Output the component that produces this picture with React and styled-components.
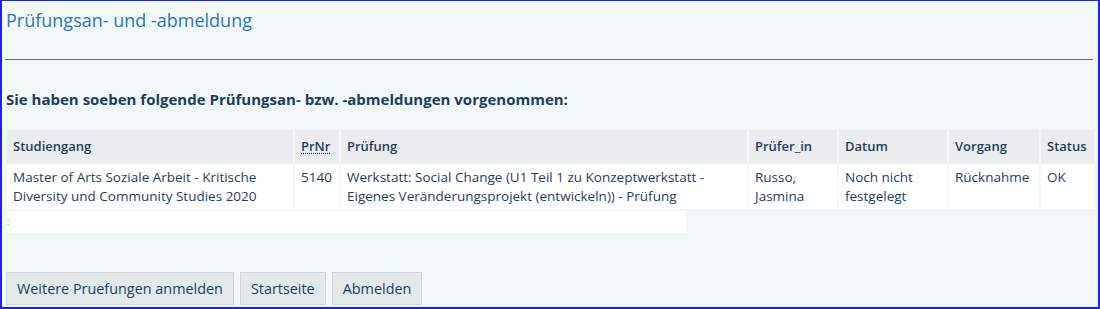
import React from "react";
import styled, { createGlobalStyle } from "styled-components";

const Global = createGlobalStyle`
  html, body { margin: 0; padding: 0; background: #ffffff; }
  body { font-family: "Open Sans", "Noto Sans", sans-serif; }
`;

const Frame = styled.div`
  box-sizing: border-box;
  width: 1100px;
  height: 309px;
  border-style: solid;
  border-color: #1f1ff2;
  border-width: 1px 2px 2px 2px;
  background: #f2f7f8;
  padding: 0 3px 0 3px;
  display: flex;
  flex-direction: column;
  overflow: hidden;
`;

const Title = styled.h1`
  margin: 7px 0 0 1px;
  font-size: 18px;
  line-height: 24px;
  font-weight: 400;
  color: #2b77b6;
`;

const Rule = styled.hr`
  margin: 27px 2px 0 0;
  border: 0;
  height: 1px;
  background: #6d6d6d;
`;

const Lead = styled.h2`
  margin: 29px 0 0 1px;
  font-size: 15px;
  line-height: 20px;
  font-weight: 700;
  color: #1d3f5e;
`;

const Table = styled.table`
  margin: 19px 0 0 0;
  border-collapse: separate;
  border-spacing: 2px;
  width: 1091px;
  font-size: 13.5px;
  line-height: 19px;
  color: #1d3f5e;
`;

const Th = styled.th`
  background: #ebeced;
  text-align: left;
  font-size: 13px;
  font-weight: 600;
  padding: 7px 6px 7px 6px;
  height: 19px;
  width: ${(p) => p.$w || "auto"};
`;

const Td = styled.td`
  background: #ffffff;
  vertical-align: top;
  padding: 3px 6px 3px 6px;
  height: 38px;
`;

const Abbr = styled.abbr`
  text-decoration: underline dotted;
  text-underline-offset: 2px;
  cursor: help;
`;

const Blank = styled.div`
  margin: 0 0 0 2px;
  width: 679px;
  height: 22px;
  background: #ffffff;
  font-size: 9px;
  line-height: 22px;
  color: #7a8a99;
`;

const Actions = styled.div`
  margin-top: 39px;
  display: flex;
  gap: 6px;
  margin-left: 1px;
`;

const Button = styled.button`
  box-sizing: border-box;
  height: 33px;
  padding: 0 10px;
  font-family: "Open Sans", "Noto Sans", sans-serif;
  font-size: 14.4px;
  color: #1d3f5e;
  background: #e3e8eb;
  border: 1px solid #cfd5d9;
  border-radius: 0;
`;

export default function App() {
  return (
    <>
      <Global />
      <Frame>
        <Title>Prüfungsan- und -abmeldung</Title>
        <Rule />
        <Lead>Sie haben soeben folgende Prüfungsan- bzw. -abmeldungen vorgenommen:</Lead>
        <Table>
          <thead>
            <tr>
              <Th $w="274px">Studiengang</Th>
              <Th $w="32px">
                <Abbr title="Prüfungsnummer">PrNr</Abbr>
              </Th>
              <Th $w="394px">Prüfung</Th>
              <Th $w="76px">Prüfer_in</Th>
              <Th $w="96px">Datum</Th>
              <Th $w="78px">Vorgang</Th>
              <Th>Status</Th>
            </tr>
          </thead>
          <tbody>
            <tr>
              <Td>
                Master of Arts Soziale Arbeit - Kritische
                <br />
                Diversity und Community Studies 2020
              </Td>
              <Td>5140</Td>
              <Td>
                Werkstatt: Social Change (U1 Teil 1 zu Konzeptwerkstatt -
                <br />
                Eigenes Veränderungsprojekt (entwickeln)) - Prüfung
              </Td>
              <Td>
                Russo,
                <br />
                Jasmina
              </Td>
              <Td>
                Noch nicht
                <br />
                festgelegt
              </Td>
              <Td>Rücknahme</Td>
              <Td>OK</Td>
            </tr>
          </tbody>
        </Table>
        <Blank>:</Blank>
        <Actions>
          <Button>Weitere Pruefungen anmelden</Button>
          <Button>Startseite</Button>
          <Button>Abmelden</Button>
        </Actions>
      </Frame>
    </>
  );
}
